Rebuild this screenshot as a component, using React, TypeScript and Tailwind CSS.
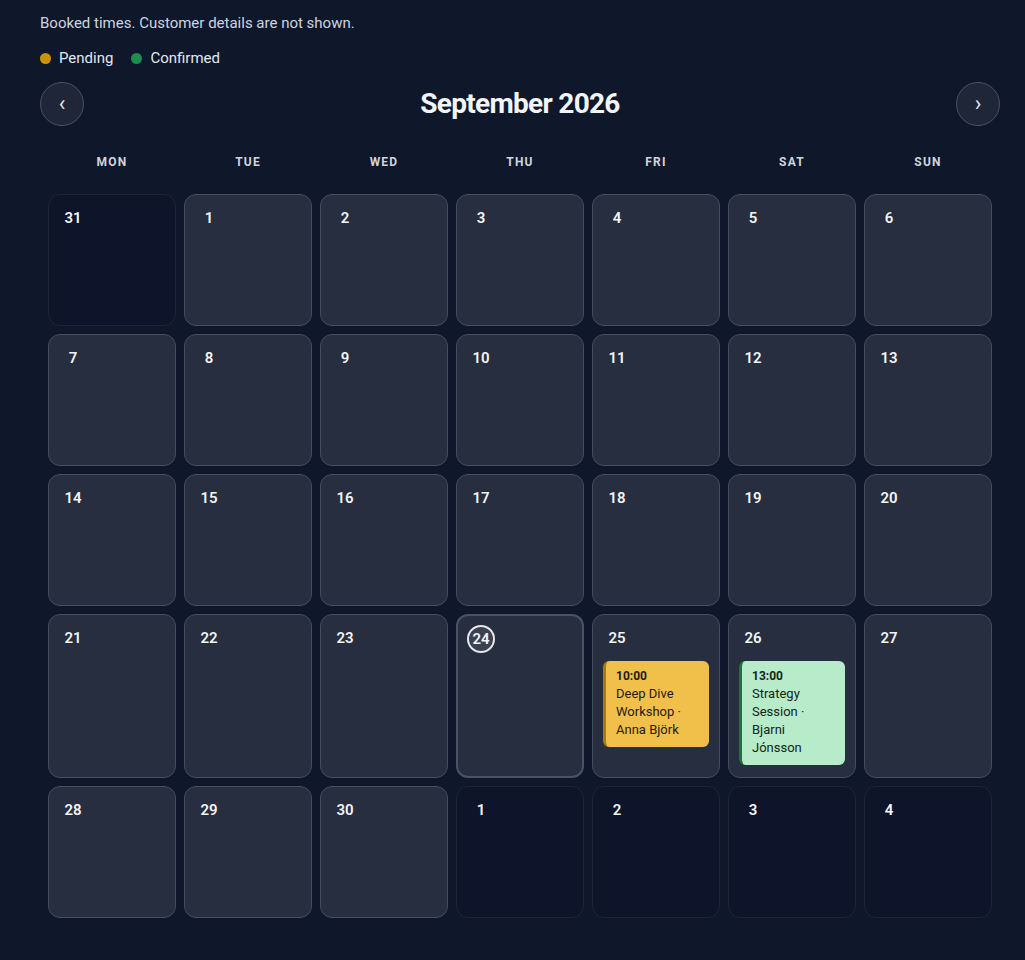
import React from "react";

type Ev = { time: string; title: string; kind: "pending" | "confirmed" };
type Day = { n: number; cur: boolean; today?: boolean; events?: Ev[] };

const weeks: Day[][] = [
  [{ n: 31, cur: false }, ...[1, 2, 3, 4, 5, 6].map((n) => ({ n, cur: true }))],
  [7, 8, 9, 10, 11, 12, 13].map((n) => ({ n, cur: true })),
  [14, 15, 16, 17, 18, 19, 20].map((n) => ({ n, cur: true })),
  [
    { n: 21, cur: true },
    { n: 22, cur: true },
    { n: 23, cur: true },
    { n: 24, cur: true, today: true },
    { n: 25, cur: true, events: [{ time: "10:00", title: "Deep Dive Workshop · Anna Björk", kind: "pending" }] },
    { n: 26, cur: true, events: [{ time: "13:00", title: "Strategy Session · Bjarni Jónsson", kind: "confirmed" }] },
    { n: 27, cur: true },
  ],
  [
    { n: 28, cur: true },
    { n: 29, cur: true },
    { n: 30, cur: true },
    { n: 1, cur: false },
    { n: 2, cur: false },
    { n: 3, cur: false },
    { n: 4, cur: false },
  ],
];

const days = ["MON", "TUE", "WED", "THU", "FRI", "SAT", "SUN"];

function Cell({ d }: { d: Day }) {
  const base = "min-h-[132px] rounded-xl flex flex-col";
  const cls = d.today
    ? `${base} border-2 border-[#4b5363] bg-[#272e3f] px-[9px] pt-[9px] pb-[11px]`
    : d.cur
    ? `${base} border border-[#464d5d] bg-[#272e3f] px-2.5 pt-2.5 pb-3`
    : `${base} border border-[#1d2436] bg-[#0e152a] px-2.5 pt-2.5 pb-3`;
  return (
    <div className={cls}>
      <div
        className={
          d.today
            ? "w-7 h-7 rounded-full border-2 border-[#e5e7eb] bg-[#3a4150] flex items-center justify-center text-[15px] font-semibold text-[#f1f5f9]"
            : "w-7 h-7 flex items-center justify-center text-[15px] font-semibold leading-none text-[#f1f5f9] pb-[2px]"
        }
      >
        {d.n}
      </div>
      {d.events?.map((e, i) => (
        <div
          key={i}
          className={
            e.kind === "pending"
              ? "mt-2 rounded-md border-l-[3px] border-[#a87b12] bg-[#f0c04a] pl-2.5 pr-2 pt-1.5 pb-2 text-[13px] leading-[18px] text-[#1f1a10]"
              : "mt-2 rounded-md border-l-[3px] border-[#17763a] bg-[#b7ebc9] pl-2.5 pr-2 pt-1.5 pb-2 text-[13px] leading-[18px] text-[#12261a]"
          }
        >
          <div className="font-bold text-[12px]">{e.time}</div>
          <div>{e.title}</div>
        </div>
      ))}
    </div>
  );
}

export default function App() {
  return (
    <div className="min-h-screen bg-[#0f172a] pl-10 pt-[13px]" style={{ fontFamily: "Roboto, 'Noto Sans', sans-serif" }}>
      <div className="w-[960px]">
        <p className="text-[15px] leading-5 text-[#cbd5e1]">Booked times. Customer details are not shown.</p>
        <div className="mt-[15px] flex h-5 items-center gap-[18px] text-[15px] text-[#e2e8f0]">
          <div className="flex items-center gap-2">
            <span className="h-[11px] w-[11px] rounded-full bg-[#ca9408]" />
            Pending
          </div>
          <div className="flex items-center gap-2">
            <span className="h-[11px] w-[11px] rounded-full bg-[#1c8f4c]" />
            Confirmed
          </div>
        </div>
        <div className="mt-[14px] flex h-11 items-center justify-between">
          <button className="flex h-11 w-11 items-center justify-center rounded-full border border-[#4a5162] bg-[#1f2637] text-[22px] leading-none text-[#e5e7eb]">
            ‹
          </button>
          <h1 className="text-[28px] font-bold tracking-tight text-[#f1f5f9]">September 2026</h1>
          <button className="flex h-11 w-11 items-center justify-center rounded-full border border-[#4a5162] bg-[#1f2637] text-[22px] leading-none text-[#e5e7eb]">
            ›
          </button>
        </div>
        <div className="mt-[26px] grid grid-cols-7 gap-2 px-2">
          {days.map((d) => (
            <div key={d} className="h-5 text-center text-[12px] font-bold leading-5 tracking-[0.1em] text-[#d1d5db]">
              {d}
            </div>
          ))}
        </div>
        <div className="mt-[22px] grid grid-cols-7 gap-2 px-2">
          {weeks.flat().map((d, i) => (
            <Cell key={i} d={d} />
          ))}
        </div>
      </div>
    </div>
  );
}
